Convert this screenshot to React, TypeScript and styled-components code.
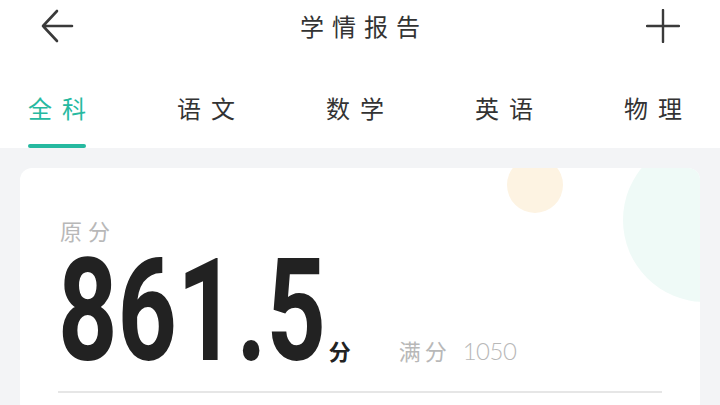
import React, { useState } from 'react';
import styled, { createGlobalStyle } from 'styled-components';

const GlobalStyle = createGlobalStyle`
  html, body {
    margin: 0;
    padding: 0;
    background: #f3f4f6;
    font-family: "Noto Sans CJK SC", "Noto Sans", sans-serif;
    color: #333;
  }
`;

const Page = styled.div`
  width: 720px;
  height: 405px;
  overflow: hidden;
  background: #f3f4f6;
`;

const Top = styled.div`
  background: #fff;
`;

const NavBar = styled.div`
  height: 52px;
  display: flex;
  align-items: center;
  justify-content: space-between;
  padding: 0 40px;
`;

const IconButton = styled.button`
  width: 34px;
  height: 34px;
  padding: 0;
  border: none;
  background: transparent;
  display: flex;
  align-items: center;
  justify-content: center;
  cursor: pointer;
`;

const Title = styled.h1`
  margin: 0 -8px 0 0;
  font-size: 24px;
  font-weight: 400;
  letter-spacing: 8px;
  color: #333;
  line-height: 32px;
`;

const TabBar = styled.div`
  display: flex;
  gap: 91px;
  padding: 40px 0 0 28px;
`;

const Tab = styled.button<{ active: boolean }>`
  display: flex;
  flex-direction: column;
  align-items: flex-start;
  padding: 0;
  border: none;
  background: transparent;
  cursor: pointer;
  font-family: inherit;
  font-size: 24px;
  line-height: 32px;
  letter-spacing: 10px;
  margin-right: -10px;
  color: ${p => (p.active ? '#26b9a0' : '#333')};
`;

const TabLine = styled.span<{ active: boolean }>`
  display: block;
  width: 58px;
  height: 4px;
  margin-top: 20px;
  border-radius: 2px;
  background: ${p => (p.active ? '#26b9a0' : 'transparent')};
`;

const Content = styled.div`
  padding: 20px 20px 0;
`;

const Card = styled.div`
  position: relative;
  overflow: hidden;
  background: #fff;
  border-radius: 12px;
  padding: 47px 38px 0;
  height: 200px;
`;

const Bubble = styled.div<{ size: number; color: string }>`
  position: absolute;
  width: ${p => p.size}px;
  height: ${p => p.size}px;
  border-radius: 50%;
  background: ${p => p.color};
`;

const Label = styled.div`
  position: relative;
  font-size: 22px;
  line-height: 30px;
  letter-spacing: 6px;
  color: #b8b8b8;
  margin-left: 2px;
`;

const ScoreRow = styled.div`
  position: relative;
  display: flex;
  align-items: baseline;
  margin-top: 13px;
`;

const Score = styled.span`
  display: inline-block;
  font-family: Roboto, "Liberation Sans", sans-serif;
  font-weight: 700;
  font-size: 143px;
  line-height: 106px;
  color: #222;
  transform: scaleX(0.725);
  transform-origin: left;
  margin-right: -99px;
`;

const Unit = styled.span`
  font-size: 22px;
  font-weight: 700;
  color: #222;
`;

const Full = styled.span`
  margin-left: 48px;
  font-size: 22px;
  letter-spacing: 4px;
  color: #b8b8b8;
`;

const FullNum = styled.span`
  margin-left: 12px;
  font-family: Lato, "Open Sans", sans-serif;
  font-weight: 300;
  font-size: 24px;
  letter-spacing: -0.5px;
`;

const Divider = styled.div`
  position: relative;
  height: 2px;
  background: #e6e6e6;
  margin-top: 25px;
`;

const tabs = ['全科', '语文', '数学', '英语', '物理'];

export default function App() {
  const [active, setActive] = useState(0);

  return (
    <Page>
      <GlobalStyle />
      <Top>
        <NavBar>
          <IconButton aria-label="返回">
            <svg width="34" height="34" viewBox="0 0 34 34" fill="none" stroke="#3a3a3a" strokeWidth="2.6" strokeLinecap="round" strokeLinejoin="round">
              <path d="M32 17H3M17 2L3 17l14 15" />
            </svg>
          </IconButton>
          <Title>学情报告</Title>
          <IconButton aria-label="添加">
            <svg width="34" height="34" viewBox="0 0 34 34" fill="none" stroke="#3a3a3a" strokeWidth="2.4" strokeLinecap="round">
              <path d="M17 1v32M1 17h32" />
            </svg>
          </IconButton>
        </NavBar>
        <TabBar>
          {tabs.map((t, i) => (
            <Tab key={t} active={active === i} onClick={() => setActive(i)}>
              {t}
              <TabLine active={active === i} />
            </Tab>
          ))}
        </TabBar>
      </Top>
      <Content>
        <Card>
          <Bubble size={56} color="#fdf3e2" style={{ left: 487, top: -11 }} />
          <Bubble size={164} color="#effaf7" style={{ left: 603, top: -30 }} />
          <Label>原分</Label>
          <ScoreRow>
            <Score>861.5</Score>
            <Unit>分</Unit>
            <Full>
              满分<FullNum>1050</FullNum>
            </Full>
          </ScoreRow>
          <Divider />
        </Card>
      </Content>
    </Page>
  );
}
